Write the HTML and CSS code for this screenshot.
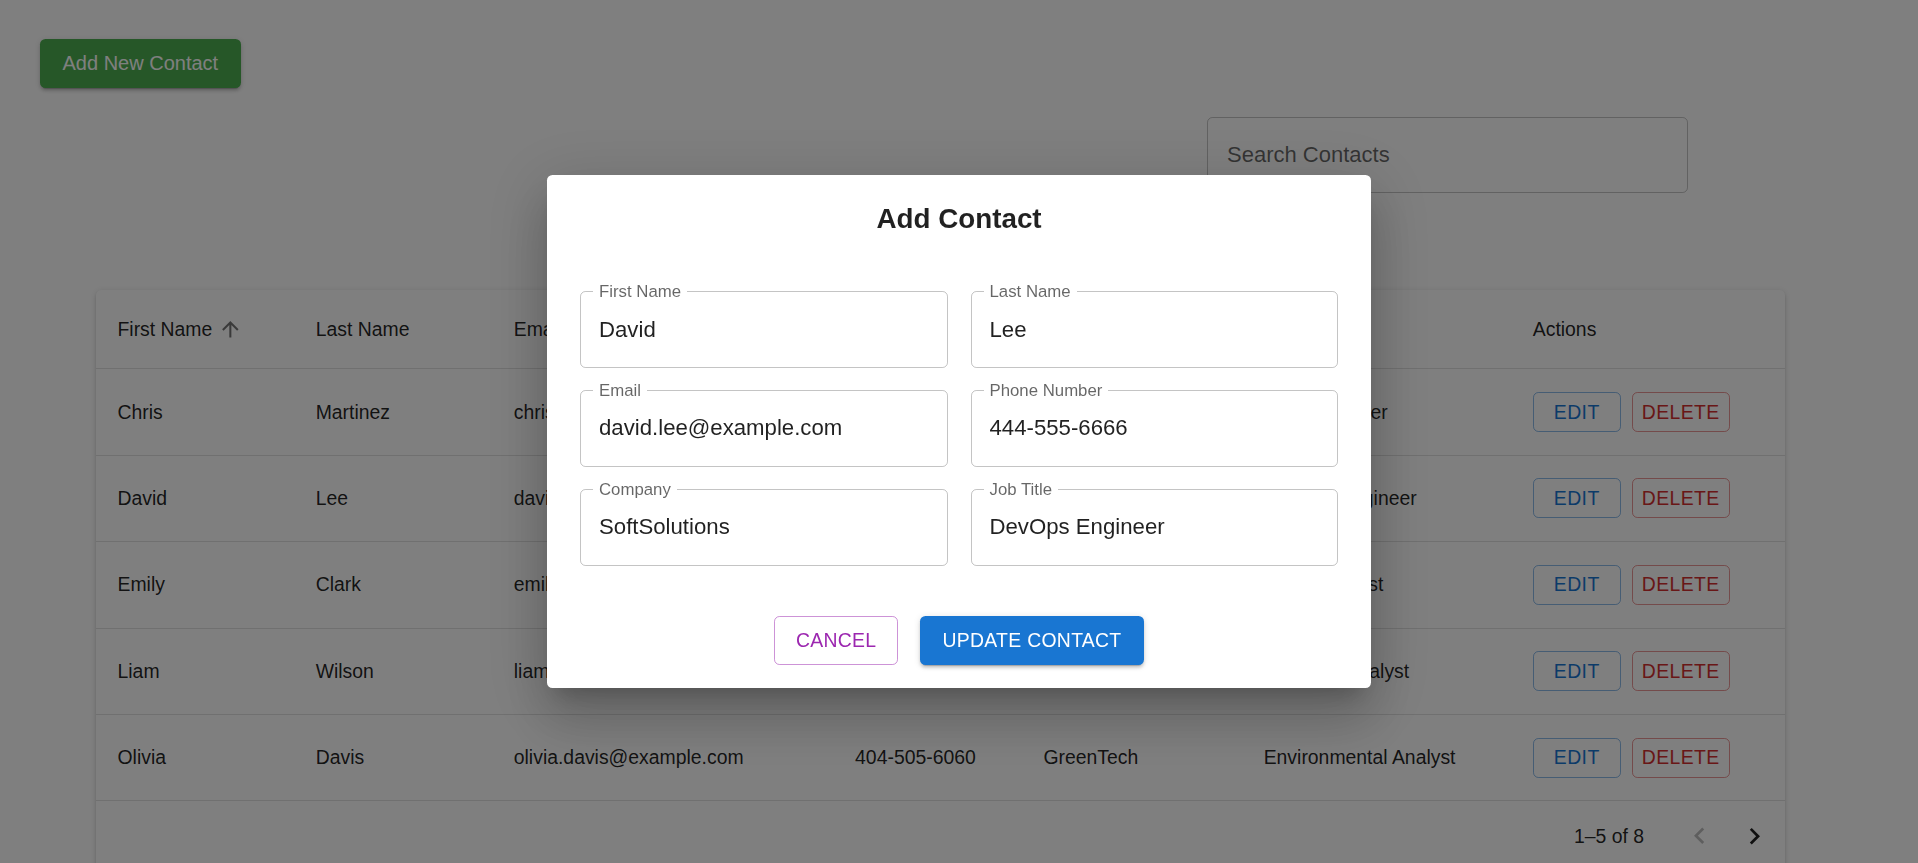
FILE: index.html
```html
<!DOCTYPE html>
<html lang="en">
<head>
<meta charset="utf-8">
<title>Contacts</title>
<link rel="stylesheet" href="styles.css">
</head>
<body>
<div class="page">
  <button class="add-btn">Add New Contact</button>

  <div class="toolbar">
    <div class="search"><span class="search-label">Search Contacts</span></div>
  </div>

  <div class="paper">
    <div class="row head">
      <div class="cell">First Name
        <svg class="sort" viewBox="0 0 24 24"><path d="M4 12l1.41 1.41L11 7.83V20h2V7.83l5.58 5.59L20 12l-8-8-8 8z"/></svg>
      </div>
      <div class="cell">Last Name</div>
      <div class="cell">Email</div>
      <div class="cell">Phone</div>
      <div class="cell">Company</div>
      <div class="cell">Job Title</div>
      <div class="cell">Actions</div>
    </div>

    <div class="row body">
      <div class="cell">Chris</div>
      <div class="cell">Martinez</div>
      <div class="cell">chris.martinez@example.com</div>
      <div class="cell">303-404-5050</div>
      <div class="cell">TechCorp</div>
      <div class="cell">Data Engineer</div>
      <div class="cell actions"><button class="btn edit">Edit</button><button class="btn del">Delete</button></div>
    </div>
    <div class="row body">
      <div class="cell">David</div>
      <div class="cell">Lee</div>
      <div class="cell">david.lee@example.com</div>
      <div class="cell">444-555-6666</div>
      <div class="cell">SoftSolutions</div>
      <div class="cell">DevOps Engineer</div>
      <div class="cell actions"><button class="btn edit">Edit</button><button class="btn del">Delete</button></div>
    </div>
    <div class="row body">
      <div class="cell">Emily</div>
      <div class="cell">Clark</div>
      <div class="cell">emily.clark@example.com</div>
      <div class="cell">505-606-7070</div>
      <div class="cell">DataWorks</div>
      <div class="cell">Data Scientist</div>
      <div class="cell actions"><button class="btn edit">Edit</button><button class="btn del">Delete</button></div>
    </div>
    <div class="row body">
      <div class="cell">Liam</div>
      <div class="cell">Wilson</div>
      <div class="cell">liam.wilson@example.com</div>
      <div class="cell">606-707-8080</div>
      <div class="cell">FinGroup</div>
      <div class="cell">Financial Analyst</div>
      <div class="cell actions"><button class="btn edit">Edit</button><button class="btn del">Delete</button></div>
    </div>
    <div class="row body">
      <div class="cell">Olivia</div>
      <div class="cell">Davis</div>
      <div class="cell">olivia.davis@example.com</div>
      <div class="cell">404-505-6060</div>
      <div class="cell">GreenTech</div>
      <div class="cell">Environmental Analyst</div>
      <div class="cell actions"><button class="btn edit">Edit</button><button class="btn del">Delete</button></div>
    </div>

    <div class="pagination">
      <span class="rows-text">1–5 of 8</span>
      <span class="icon-btn disabled">
        <svg viewBox="0 0 24 24"><path d="M15.41 16.09l-4.58-4.59 4.58-4.59L14 5.5l-6 6 6 6z"/></svg>
      </span>
      <span class="icon-btn">
        <svg viewBox="0 0 24 24"><path d="M8.59 16.34l4.58-4.59-4.58-4.59L10 5.75l6 6-6 6z"/></svg>
      </span>
    </div>
  </div>
</div>

<div class="backdrop"></div>

<div class="dialog-wrap">
  <div class="dialog">
    <h2 class="dialog-title">Add Contact</h2>
    <div class="dialog-content">
      <div class="field"><span class="field-label">First Name</span>David</div>
      <div class="field"><span class="field-label">Last Name</span>Lee</div>
      <div class="field"><span class="field-label">Email</span>david.lee@example.com</div>
      <div class="field"><span class="field-label">Phone Number</span>444-555-6666</div>
      <div class="field"><span class="field-label">Company</span>SoftSolutions</div>
      <div class="field"><span class="field-label">Job Title</span>DevOps Engineer</div>
    </div>
    <div class="dialog-actions">
      <button class="cancel-btn">Cancel</button>
      <button class="update-btn">Update Contact</button>
    </div>
  </div>
</div>
</body>
</html>
```

FILE: styles.css
```css
html, body {
  margin: 0;
  padding: 0;
  overflow: hidden;
  height: 100%;
  background: #ffffff;
  font-family: "Liberation Sans", Arial, Helvetica, sans-serif;
  color: rgba(0, 0, 0, 0.87);
}

.page {
  padding: 39px 0 0 40px;
}

.add-btn {
  display: inline-flex;
  align-items: center;
  height: 49px;
  padding: 0 22.5px;
  border: none;
  border-radius: 5.5px;
  background: #4caf50;
  color: #ffffff;
  font-family: inherit;
  font-size: 20px;
  box-shadow: 0 4px 1px -3px rgba(0,0,0,0.2), 0 3px 3px 0 rgba(0,0,0,0.14), 0 1px 7px 0 rgba(0,0,0,0.12);
}

.toolbar {
  display: flex;
  justify-content: flex-end;
  padding-right: 230px;
  margin-top: 29px;
}

.search {
  box-sizing: border-box;
  width: 481px;
  height: 76px;
  border: 1px solid rgba(0, 0, 0, 0.23);
  border-radius: 5.5px;
  display: flex;
  align-items: center;
  padding-left: 19px;
}

.search-label {
  font-size: 22px;
  color: rgba(0, 0, 0, 0.6);
}

.paper {
  margin-top: 97px;
  margin-left: 55.5px;
  width: 1689.5px;
  background: #ffffff;
  border-radius: 5.5px;
  box-shadow: 0 4px 2px -2px rgba(0,0,0,0.2), 0 2px 3px 0 rgba(0,0,0,0.14), 0 1px 7px 0 rgba(0,0,0,0.12);
}

.row {
  display: grid;
  grid-template-columns: 198.2px 198.1px 341.3px 188.4px 220.2px 269.1px 1fr;
  box-sizing: border-box;
  border-bottom: 1px solid #e0e0e0;
  font-size: 19.4px;
}

.row.head {
  height: 79.4px;
}

.row.body {
  height: 86.4px;
}

.cell {
  display: flex;
  align-items: center;
  padding: 0 22px;
  white-space: nowrap;
}

.sort {
  width: 24.7px;
  height: 24.7px;
  margin-left: 5.5px;
  fill: rgba(0, 0, 0, 0.54);
}

.actions {
  gap: 11px;
}

.btn {
  box-sizing: border-box;
  height: 40px;
  min-width: 88px;
  padding: 0 9px;
  background: transparent;
  border-radius: 5.5px;
  font-family: inherit;
  font-size: 19.4px;
  letter-spacing: 0.4px;
  text-transform: uppercase;
}

.btn.edit {
  color: #1976d2;
  border: 1px solid rgba(25, 118, 210, 0.5);
}

.btn.del {
  color: #d32f2f;
  border: 1px solid rgba(211, 47, 47, 0.5);
}

.pagination {
  height: 71px;
  display: flex;
  justify-content: flex-end;
  align-items: center;
  padding-right: 3px;
  font-size: 19.4px;
}

.rows-text {
  margin-right: 28px;
}

.icon-btn {
  width: 55px;
  height: 55px;
  display: flex;
  align-items: center;
  justify-content: center;
}

.icon-btn svg {
  width: 33px;
  height: 33px;
  fill: rgba(0, 0, 0, 0.87);
}

.icon-btn.disabled svg {
  fill: rgba(0, 0, 0, 0.26);
}

.backdrop {
  position: fixed;
  inset: 0;
  background: rgba(0, 0, 0, 0.5);
}

.dialog-wrap {
  position: fixed;
  inset: 0;
  display: flex;
  align-items: center;
  justify-content: center;
}

.dialog {
  width: 824px;
  background: #ffffff;
  border-radius: 5.5px;
  box-shadow: 0 15px 21px -10px rgba(0,0,0,0.2), 0 33px 52px 4px rgba(0,0,0,0.14), 0 12px 63px 11px rgba(0,0,0,0.12);
}

.dialog-title {
  margin: 0;
  padding: 22.5px 33px 22px;
  font-size: 27.8px;
  line-height: 44px;
  font-weight: bold;
  text-align: center;
  color: rgba(0, 0, 0, 0.87);
}

.dialog-content {
  padding: 28px 33px 0;
  display: grid;
  grid-template-columns: 1fr 1fr;
  column-gap: 23px;
  row-gap: 22.6px;
}

.field {
  position: relative;
  box-sizing: border-box;
  height: 76.4px;
  border: 1px solid rgba(0, 0, 0, 0.23);
  border-radius: 5.5px;
  padding: 0 18px;
  display: flex;
  align-items: center;
  font-size: 22.2px;
  color: rgba(0, 0, 0, 0.87);
}

.field-label {
  position: absolute;
  top: -10px;
  left: 12px;
  padding: 0 6px;
  background: #ffffff;
  font-size: 16.8px;
  line-height: 19px;
  color: rgba(0, 0, 0, 0.6);
}

.dialog-actions {
  display: flex;
  justify-content: center;
  gap: 22.5px;
  padding: 50.5px 0 23px;
}

.cancel-btn,
.update-btn {
  box-sizing: border-box;
  height: 49px;
  border-radius: 5.5px;
  font-family: inherit;
  font-size: 19.4px;
  letter-spacing: 0.3px;
  text-transform: uppercase;
}

.cancel-btn {
  padding: 0 20.5px;
  background: transparent;
  color: #9c27b0;
  border: 1px solid rgba(156, 39, 176, 0.5);
}

.update-btn {
  padding: 0 22px;
  background: #1976d2;
  color: #ffffff;
  border: none;
  box-shadow: 0 4px 1px -3px rgba(0,0,0,0.2), 0 3px 3px 0 rgba(0,0,0,0.14), 0 1px 7px 0 rgba(0,0,0,0.12);
}
```
